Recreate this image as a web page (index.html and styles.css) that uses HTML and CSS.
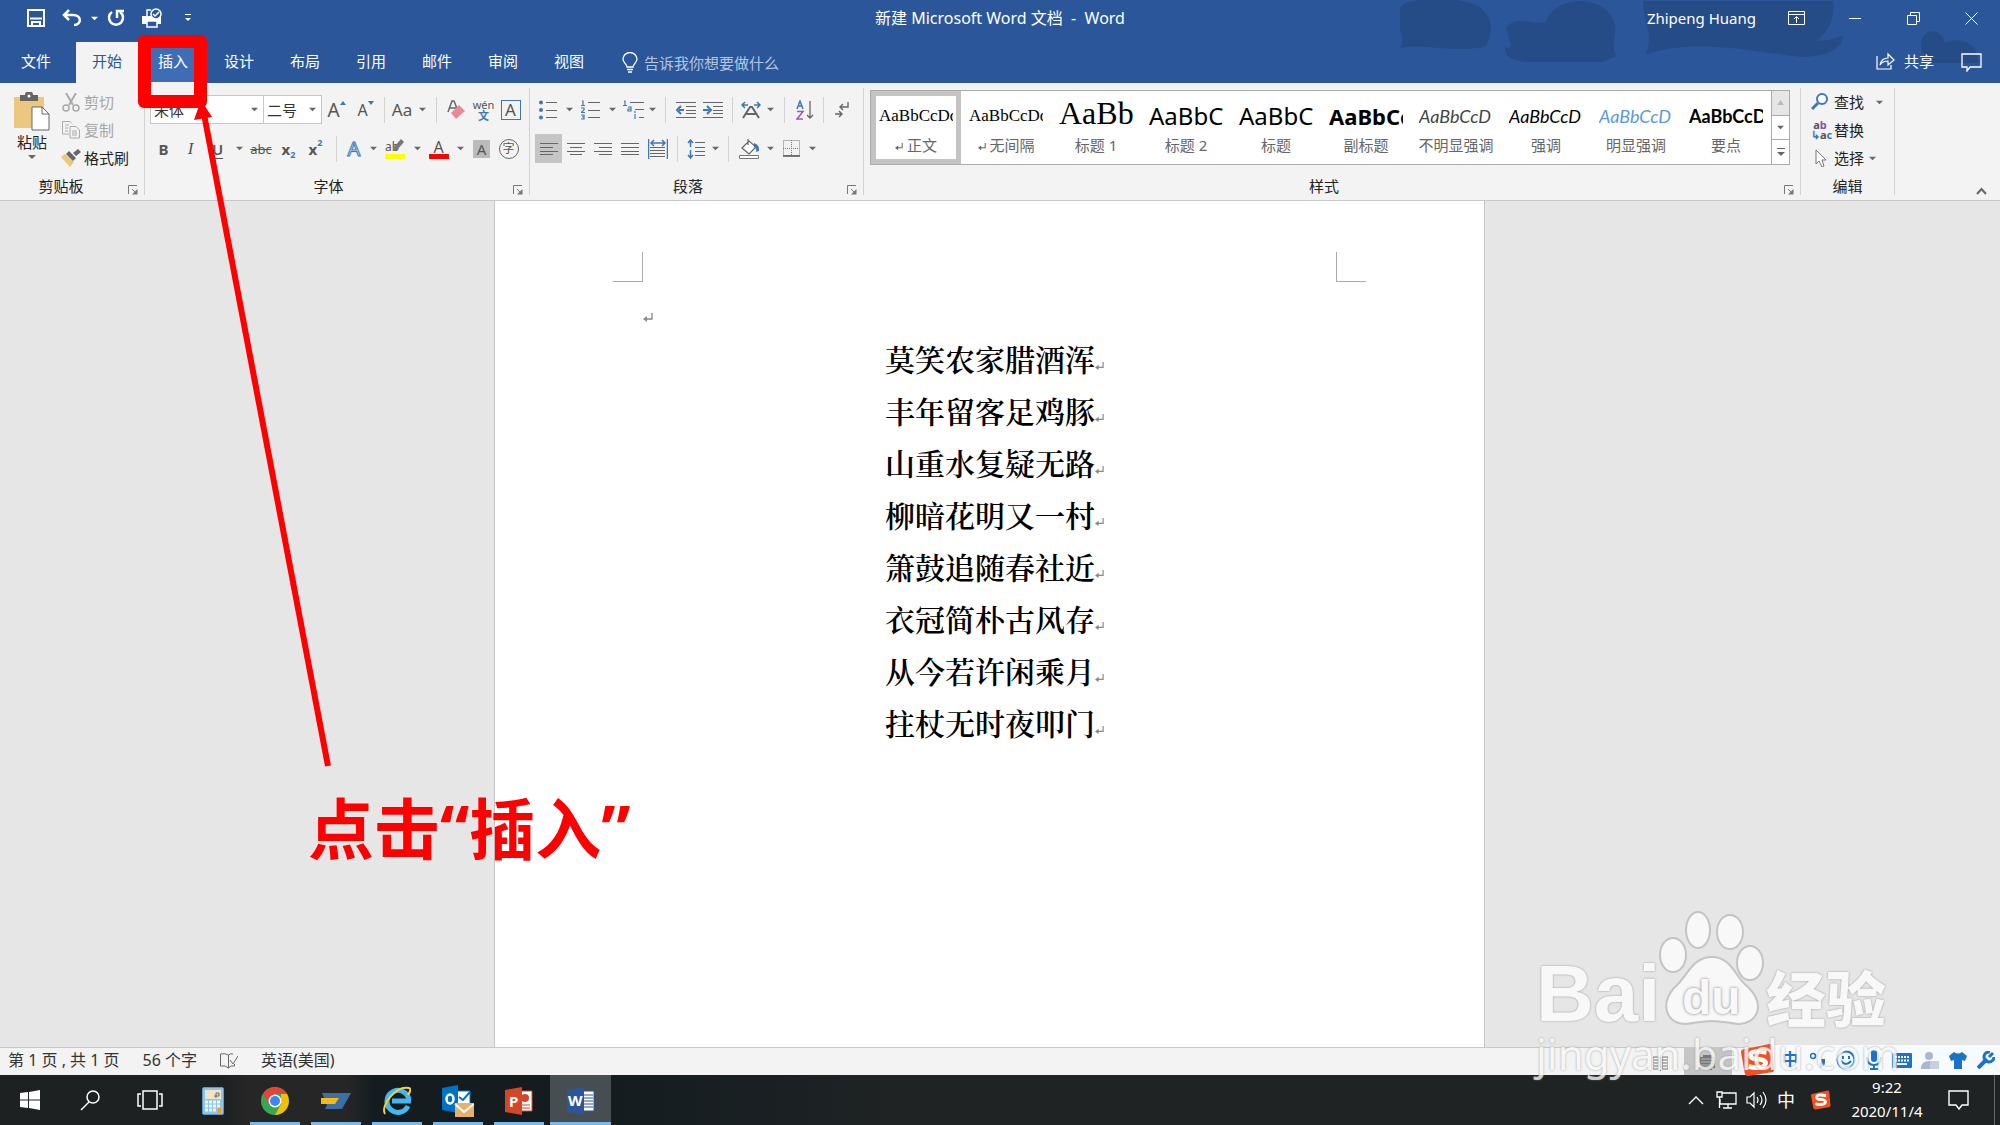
FILE: index.html
```html
<!DOCTYPE html>
<html lang="zh-CN">
<head>
<meta charset="utf-8">
<title>新建 Microsoft Word 文档 - Word</title>
<link rel="stylesheet" href="styles.css">
</head>
<body>
<svg class="defs" aria-hidden="true">
  <symbol id="caret" viewBox="0 0 8 8"><path d="M0 2h8L4 6z" fill="currentColor"/></symbol>
  <symbol id="launcher" viewBox="0 0 10 10"><path d="M.5 9V.5H9M4 4l4 4" fill="none" stroke="#777"/><path d="M9.500 4v5.500H4z" fill="#777"/></symbol>
  <symbol id="ret" viewBox="0 0 10 10"><path d="M9 0v6H3" fill="none" stroke="currentColor" stroke-width="1.300"/><path d="M0 6l4-3v6z" fill="currentColor"/></symbol>
  <symbol id="sogou" viewBox="0 0 36 36"><path d="M2 7L30 1q3 0 3 3l2 24q0 3-3 3L8 35q-3 0-4-3L0 10q0-3 2-3z" fill="#f4511e"/><path d="M27 10q-17-3-17 3 0 4 8 4 9 1 8 5-2 6-18 3" fill="none" stroke="#fff" stroke-width="5"/></symbol>
</svg>
<div class="app">
  <header class="head">
    <svg class="clouds" viewBox="0 0 600 64" aria-hidden="true"><g fill="#244a83" opacity=".8"><path d="M4 4c20-8 60-6 74 2 20 14 12 32 8 40-22 8-62-3-86 2 4-8 2-14-1-20-4-10-2-20 5-24z"/><path d="M106 28c10-14 28-2 40-6 8-28 60-28 68 0 4 12-4 20 2 34l-14 6h-70c-20 0-28-6-27-15 10 5 4-8 1-19z"/><path d="M243 1h190c3 20-8 33-16 40 10 0 20-3 26-6 0 16-20 21-40 22-50-5-110-20-158-2 10-16-2-35-2-54z"/><path d="M521 45c0-18 22-18 24-2 12-6 26-2 31 8l3 12h-55c3-8-3-10-3-18z"/></g></svg>
    <div class="titlebar">
      <div class="qat">
        <button class="w36" aria-label="保存"><svg width="18" height="18" viewBox="0 0 18 18"><path d="M1 1h16v16H1zM3 9.500h12M5 17v-4h8v4" fill="none" stroke="#fff" stroke-width="2"/></svg></button>
        <button class="w36" aria-label="撤消"><svg width="20" height="18" viewBox="0 0 20 18"><path d="M7 1L2 6l5 5M2 6h9c9 0 9 10 1 10" fill="none" stroke="#fff" stroke-width="2.500"/></svg></button>
        <button class="w8" aria-label="撤消选项"><svg width="7" height="7"><use href="#caret"/></svg></button>
        <button class="w36" aria-label="重复"><svg width="18" height="18" viewBox="0 0 18 18"><path d="M5 3a7 7 0 1 0 8 0M10 9V2h7" fill="none" stroke="#fff" stroke-width="2.500"/></svg></button>
        <button class="w36" aria-label="打印预览"><svg width="22" height="20" viewBox="0 0 22 20"><path d="M1 8h19v8H1z" fill="#fff"/><path d="M6 8V2h4M6 13h10v6H6z" fill="#2b579a" stroke="#fff" stroke-width="1.500"/><circle cx="15" cy="6" r="5" fill="#2b579a" stroke="#fff" stroke-width="1.500"/><path d="M12 6l2 2 4-4" fill="none" stroke="#fff" stroke-width="1.500"/></svg></button>
        <button class="w36" aria-label="自定义快速访问工具栏"><svg width="8" height="10" viewBox="0 0 8 10"><path d="M1 1.500h6" stroke="#fff"/><path d="M1 5h6L4 8z" fill="#fff"/></svg></button>
      </div>
      <div class="title">新建 Microsoft Word 文档&nbsp; -&nbsp; Word</div>
      <div class="win">
        <span class="user">Zhipeng Huang</span>
        <button class="w60" aria-label="功能区显示选项"><svg width="17" height="14" viewBox="0 0 17 14"><path d="M.5.5h16v13H.5zM1 3.500h15M8.500 12V6M6 8l2.500-2.500L11 8" fill="none" stroke="#fff"/></svg></button>
        <button class="w58" aria-label="最小化"><svg width="12" height="14"><path d="M0 7.500h12" stroke="#fff"/></svg></button>
        <button class="w58" aria-label="还原"><svg width="13" height="13" viewBox="0 0 13 13"><path d="M.5 3.500h9v9h-9zM3.500 3V.5h9v9H10" fill="none" stroke="#fff"/></svg></button>
        <button class="w58" aria-label="关闭"><svg width="13" height="13" viewBox="0 0 13 13"><path d="M.5.5l12 12M12.500.5l-12 12" stroke="#fff"/></svg></button>
      </div>
    </div>
    <nav class="tabs">
      <button class="tab file">文件</button>
      <button class="tab active">开始</button>
      <button class="tab hover">插入</button>
      <button class="tab">设计</button>
      <button class="tab">布局</button>
      <button class="tab">引用</button>
      <button class="tab">邮件</button>
      <button class="tab">审阅</button>
      <button class="tab">视图</button>
      <label class="tell"><svg width="16" height="21" viewBox="0 0 16 21"><path d="M5 15c0-3-4-4-4-8a7 6.500 0 0 1 14 0c0 4-4 5-4 8zM5 17.500h6M6 20h4" fill="none" stroke="#fff" stroke-width="1.300"/></svg><input type="text" aria-label="操作说明搜索" placeholder="告诉我你想要做什么"></label>
      <button class="share"><svg width="20" height="18" viewBox="0 0 20 18"><path d="M1 4v13h14v-4M4 13c1-5 4-7 8-7V2l6 6-6 5v-4c-4 0-6 1-8 4z" fill="none" stroke="#fff" stroke-width="1.200"/></svg>共享</button>
      <button class="comment" aria-label="批注"><svg width="21" height="19" viewBox="0 0 21 19"><path d="M1 1h19v13H9l-3 4v-4H1z" fill="none" stroke="#fff" stroke-width="1.300"/></svg></button>
    </nav>
  </header>

  <section class="ribbon">
    <div class="group clip">
      <div class="body cliprow">
        <button class="paste"><svg width="36" height="39" viewBox="0 0 36 39"><path d="M0 5h30v31H0z" fill="#ecc77f"/><path d="M6 3h5a4 4 0 0 1 8 0h5v6H6z" fill="#666"/><circle cx="15" cy="4" r="1.500" fill="#fff"/><path d="M18 15h10l7 7v16H18z" fill="#fff" stroke="#666"/><path d="M28 15v7h7" fill="none" stroke="#666"/></svg><span>粘贴</span><svg width="8" height="8"><use href="#caret"/></svg></button>
        <div class="stack">
          <button class="line off"><svg width="18" height="19" viewBox="0 0 18 19"><path d="M4 0l7 12M14 0L7 12" stroke="#aaa" stroke-width="2"/><circle cx="4" cy="15" r="3" fill="none" stroke="#aaa" stroke-width="1.500"/><circle cx="14" cy="15" r="3" fill="none" stroke="#aaa" stroke-width="1.500"/></svg>剪切</button>
          <button class="line off"><svg width="18" height="18" viewBox="0 0 18 18"><path d="M7 13H.5V.5H8l2 2M8 5.500h6l3.500 3.500v8H8zM10 10h5M10 12h5M10 14h5M3 4h4M3 7h3M3 10h3" fill="none" stroke="#aaa"/></svg>复制</button>
          <button class="line"><svg width="20" height="18" viewBox="0 0 20 18"><path d="M0 8l4-3 9 8-4 5z" fill="#ecc77f"/><path d="M5 5l3-3 7 7-3 3zM12 4l5-4 3 3-5 4z" fill="#666"/></svg>格式刷</button>
        </div>
      </div>
      <div class="foot"><span>剪贴板</span><button aria-label="剪贴板选项"><svg width="10" height="10"><use href="#launcher"/></svg></button></div>
    </div>

    <div class="group font">
      <div class="body rows">
        <div class="row">
          <label class="combo face"><select aria-label="字体"><option>宋体</option></select><svg width="7" height="7"><use href="#caret"/></svg></label>
          <label class="combo size"><select aria-label="字号"><option>二号</option></select><svg width="7" height="7"><use href="#caret"/></svg></label>
          <button class="w29 big" aria-label="增大字号">A<svg class="up" width="6" height="4" viewBox="0 0 6 4"><path d="M0 4l3-4 3 4z" fill="#3e77b5"/></svg></button>
          <button class="w29 mid" aria-label="减小字号">A<svg class="up" width="6" height="4" viewBox="0 0 6 4"><path d="M0 0h6L3 4z" fill="#3e77b5"/></svg></button>
          <i class="sep w8"></i>
          <button class="w42 case" aria-label="更改大小写">Aa<svg width="7" height="7"><use href="#caret"/></svg></button>
          <i class="sep w12"></i>
          <button class="w28" aria-label="清除格式"><svg width="18" height="20" viewBox="0 0 18 20"><path d="M1 12L5 1h2l4 10M3 8h6" fill="none" stroke="#666" stroke-width="1.500"/><path d="M4 13l8-8 6 6-9 8z" fill="#e8899a"/></svg></button>
          <button class="w27 pinyin" aria-label="拼音指南"><span>wén</span><b>文</b></button>
          <button class="w27" aria-label="字符边框"><span class="boxed">A</span></button>
        </div>
        <div class="row">
          <button class="w27 bold">B</button>
          <button class="w27 ital">I</button>
          <button class="w27 under">U</button>
          <button class="w16" aria-label="下划线选项"><svg width="7" height="7"><use href="#caret"/></svg></button>
          <button class="w28 strike">abc</button>
          <button class="w27 script">x<sub>2</sub></button>
          <button class="w27 script">x<sup>2</sup></button>
          <i class="sep w14"></i>
          <button class="w22 glow">A</button>
          <button class="w16" aria-label="文本效果选项"><svg width="7" height="7"><use href="#caret"/></svg></button>
          <button class="w28 ink yellow"><span>ab<svg width="11" height="12" viewBox="0 0 11 12"><path d="M0 9l8-9 3 3-7 8-4 1z" fill="#777"/></svg></span></button>
          <button class="w16" aria-label="突出显示选项"><svg width="7" height="7"><use href="#caret"/></svg></button>
          <button class="w27 ink red"><span>A</span></button>
          <button class="w16" aria-label="字体颜色选项"><svg width="7" height="7"><use href="#caret"/></svg></button>
          <button class="w27"><span class="shade">A</span></button>
          <button class="w27"><span class="ring">字</span></button>
        </div>
      </div>
      <div class="foot"><span>字体</span><button aria-label="字体选项"><svg width="10" height="10"><use href="#launcher"/></svg></button></div>
    </div>

    <div class="group para">
      <div class="body rows">
        <div class="row">
          <button class="w26" aria-label="项目符号"><svg width="18" height="20" viewBox="0 0 18 20"><path d="M7 2.500h11M7 10.500h11M7 17.500h11" stroke="#666"/><g fill="#3e77b5"><circle cx="2" cy="2.500" r="2"/><circle cx="2" cy="10" r="2"/><circle cx="2" cy="17.500" r="2"/></g></svg></button>
          <button class="w16" aria-label="项目符号选项"><svg width="7" height="7"><use href="#caret"/></svg></button>
          <button class="w27" aria-label="编号"><svg width="19" height="20" viewBox="0 0 19 20"><path d="M7 2.500h12M7 10.500h12M7 17.500h12" stroke="#666"/><path d="M1 1h1v4M0 5.500h4M0 8h3v2L0 12.500h4M0 15h3v4H0M1 17h2" fill="none" stroke="#3e77b5" stroke-width="1.200"/></svg></button>
          <button class="w16" aria-label="编号选项"><svg width="7" height="7"><use href="#caret"/></svg></button>
          <button class="w26" aria-label="多级列表"><svg width="21" height="20" viewBox="0 0 21 20"><path d="M7 2.500h14M12 9.500h9M16 17.500h5" stroke="#666"/><path d="M1 1h1v4M0 5.500h4M5 7h3v4H5V9h3M12 14v5M12 11v2" fill="none" stroke="#3e77b5" stroke-width="1.200"/></svg></button>
          <button class="w12" aria-label="多级列表选项"><svg width="7" height="7"><use href="#caret"/></svg></button>
          <i class="sep w14"></i>
          <button class="w27" aria-label="减少缩进量"><svg width="20" height="18" viewBox="0 0 20 18"><path d="M0 1.500h20M10 5.500h10M10 9.500h10M10 12.500h10M0 16.500h20" stroke="#666"/><path d="M8 9H3M5 5L1 9l4 4" fill="none" stroke="#3e77b5" stroke-width="2"/></svg></button>
          <button class="w28" aria-label="增加缩进量"><svg width="20" height="18" viewBox="0 0 20 18"><path d="M0 1.500h20M10 5.500h10M10 9.500h10M10 12.500h10M0 16.500h20" stroke="#666"/><path d="M0 9h6M4 5l4 4-4 4" fill="none" stroke="#3e77b5" stroke-width="2"/></svg></button>
          <i class="sep w10"></i>
          <button class="w27" aria-label="中文版式"><svg width="20" height="18" viewBox="0 0 20 18"><path d="M2 17L9 6h2l7 11M5 13h10" fill="none" stroke="#666" stroke-width="2"/><path d="M4 1L1 4l3 3M1 4h6M16 1l3 3-3 3M19 4h-6" fill="none" stroke="#3e77b5" stroke-width="1.500"/></svg></button>
          <button class="w12" aria-label="中文版式选项"><svg width="7" height="7"><use href="#caret"/></svg></button>
          <i class="sep w16"></i>
          <button class="w26" aria-label="排序"><svg width="18" height="20" viewBox="0 0 18 20"><path d="M1 9l3-8 3 8M2 6h4" fill="none" stroke="#3e77b5" stroke-width="1.500"/><path d="M1 11.500h6L1 19h6" fill="none" stroke="#9b59b6" stroke-width="1.500"/><path d="M14 1v17M11 15l3 3 3-3" fill="none" stroke="#666" stroke-width="1.300"/></svg></button>
          <i class="sep w10"></i>
          <button class="w28" aria-label="显示编辑标记"><svg width="14" height="16" viewBox="0 0 14 16"><path d="M13 0v5H6M8 2L5 5l3 3M0 12h6M4 9l3 3-3 3" fill="none" stroke="#666" stroke-width="1.400"/></svg></button>
        </div>
        <div class="row">
          <button class="w27 on" aria-label="左对齐"><svg width="18" height="14"><path d="M0 1.500h18M0 5.500h13M0 9.500h18M0 12.500h13" stroke="#666"/></svg></button>
          <button class="w27" aria-label="居中"><svg width="18" height="14"><path d="M0 1.500h18M3 5.500h12M0 9.500h18M3 12.500h12" stroke="#666"/></svg></button>
          <button class="w27" aria-label="右对齐"><svg width="18" height="14"><path d="M0 1.500h18M5 5.500h13M0 9.500h18M5 12.500h13" stroke="#666"/></svg></button>
          <button class="w27" aria-label="两端对齐"><svg width="18" height="14"><path d="M0 1.500h18M0 5.500h18M0 9.500h18M0 12.500h18" stroke="#666"/></svg></button>
          <button class="w29" aria-label="分散对齐"><svg width="20" height="20" viewBox="0 0 20 20"><path d="M.5 0v20M19.500 0v20M3 4h14M6 1L3 4l3 3M14 1l3 3-3 3" fill="none" stroke="#3e77b5" stroke-width="1.500"/><path d="M2 8.500h15M2 11.500h15M2 14.500h15M2 17.500h15" stroke="#666"/></svg></button>
          <i class="sep w10"></i>
          <button class="w28" aria-label="行距"><svg width="18" height="20" viewBox="0 0 18 20"><path d="M8 3.500h10M8 8.500h10M8 12.500h10M8 16.500h10" stroke="#666"/><path d="M3.500 1v7M1 4l2.500-3L6 4M3.500 11v8M1 16l2.500 3L6 16" fill="none" stroke="#3e77b5" stroke-width="1.500"/></svg></button>
          <button class="w10" aria-label="行距选项"><svg width="7" height="7"><use href="#caret"/></svg></button>
          <i class="sep w16"></i>
          <button class="w26" aria-label="底纹"><svg width="21" height="20" viewBox="0 0 21 20"><path d="M3 9l7-7 7 6-7 7zM9 6V0" fill="#fff" stroke="#666" stroke-width="1.200"/><path d="M15 4q6 2 5 8l-3 1q1-4-2-5z" fill="#3e77b5"/><path d="M.5 16.500h19v3H.5z" fill="#fff" stroke="#777"/></svg></button>
          <button class="w16" aria-label="底纹选项"><svg width="7" height="7"><use href="#caret"/></svg></button>
          <button class="w26" aria-label="边框"><svg width="17" height="17" viewBox="0 0 17 17"><path d="M.5.5h16v15H.5zM8.500 0v16M0 8.500h16" fill="none" stroke="#777" stroke-dasharray="1 1"/><path d="M0 16h17" stroke="#555" stroke-width="1.500"/></svg></button>
          <button class="w16" aria-label="边框选项"><svg width="7" height="7"><use href="#caret"/></svg></button>
        </div>
      </div>
      <div class="foot"><span>段落</span><button aria-label="段落选项"><svg width="10" height="10"><use href="#launcher"/></svg></button></div>
    </div>

    <div class="group styles">
      <div class="body">
        <div class="gallery">
          <button class="style sel"><span class="pv song">AaBbCcDd</span><span><svg width="8" height="8"><use href="#ret"/></svg> 正文</span></button>
          <button class="style"><span class="pv song">AaBbCcDd</span><span><svg width="8" height="8"><use href="#ret"/></svg> 无间隔</span></button>
          <button class="style"><span class="pv h1">AaBb</span><span>标题 1</span></button>
          <button class="style"><span class="pv h2">AaBbC</span><span>标题 2</span></button>
          <button class="style"><span class="pv h2">AaBbC</span><span>标题</span></button>
          <button class="style"><span class="pv h2 heavy">AaBbCc</span><span>副标题</span></button>
          <button class="style"><span class="pv em soft">AaBbCcD</span><span>不明显强调</span></button>
          <button class="style"><span class="pv em">AaBbCcD</span><span>强调</span></button>
          <button class="style"><span class="pv em blue">AaBbCcD</span><span>明显强调</span></button>
          <button class="style"><span class="pv key">AaBbCcDd</span><span>要点</span></button>
          <div class="scroll">
            <button class="dis" aria-label="上一行"><svg width="7" height="5" viewBox="0 0 7 5"><path d="M0 5l3.500-5L7 5z" fill="#bbb"/></svg></button>
            <button aria-label="下一行"><svg width="7" height="7"><use href="#caret"/></svg></button>
            <button aria-label="其他"><svg width="8" height="9" viewBox="0 0 8 9"><path d="M0 .5h8" stroke="#666"/><path d="M0 4h8L4 8z" fill="#666"/></svg></button>
          </div>
        </div>
      </div>
      <div class="foot"><span>样式</span><button aria-label="样式选项"><svg width="10" height="10"><use href="#launcher"/></svg></button></div>
    </div>

    <div class="group edit">
      <div class="body stack">
        <button class="line"><svg width="18" height="18" viewBox="0 0 18 18"><circle cx="11" cy="6" r="5" fill="#fff" stroke="#3e77b5" stroke-width="2"/><path d="M7 10l-6 6" stroke="#3e77b5" stroke-width="3"/></svg>查找<svg class="gap" width="7" height="7"><use href="#caret"/></svg></button>
        <button class="line"><span class="abac"><span>a<em>b</em></span><span><i>↳</i>a<i>c</i></span></span>替换</button>
        <button class="line"><svg width="18" height="18" viewBox="0 0 18 18"><path d="M5 1v14l3-3 3 6 2-1-2-6h4z" fill="#fff" stroke="#777"/></svg>选择<svg width="7" height="7"><use href="#caret"/></svg></button>
      </div>
      <div class="foot"><span>编辑</span></div>
    </div>
    <div class="tail"><button aria-label="折叠功能区"><svg width="11" height="8" viewBox="0 0 11 8"><path d="M1 7l4.500-5L10 7" fill="none" stroke="#666" stroke-width="2"/></svg></button></div>
  </section>

  <main class="canvas">
    <article class="page">
      <div class="corners"><i class="tl"></i><i class="tr"></i></div>
      <div class="text">
        <p class="empty"><svg width="10" height="10"><use href="#ret"/></svg></p>
        <p>莫笑农家腊酒浑<svg width="9" height="9"><use href="#ret"/></svg></p>
        <p>丰年留客足鸡豚<svg width="9" height="9"><use href="#ret"/></svg></p>
        <p>山重水复疑无路<svg width="9" height="9"><use href="#ret"/></svg></p>
        <p>柳暗花明又一村<svg width="9" height="9"><use href="#ret"/></svg></p>
        <p>箫鼓追随春社近<svg width="9" height="9"><use href="#ret"/></svg></p>
        <p>衣冠简朴古风存<svg width="9" height="9"><use href="#ret"/></svg></p>
        <p>从今若许闲乘月<svg width="9" height="9"><use href="#ret"/></svg></p>
        <p>拄杖无时夜叩门<svg width="9" height="9"><use href="#ret"/></svg></p>
      </div>
    </article>
  </main>

  <div class="status">
    <span>第 1 页 , 共 1 页</span><span>56 个字</span>
    <svg width="18" height="16" viewBox="0 0 18 16"><path d="M8.500 15V2Q5 0 .5 1v12q5-1 8 2 2-3 6-2v-2M8.500 2Q11 0 13 1M10 7l3 4 5-8" fill="none" stroke="#666"/></svg>
    <span>英语(美国)</span>
    <div class="views">
      <button class="w48" aria-label="阅读视图"><svg width="15" height="16" viewBox="0 0 15 16"><path d="M0 2h6v12H0zM9 2h6v12H9zM7.500 0v16M1 5h5M1 8h5M1 11h5M9 5h5M9 8h5M9 11h5" fill="none" stroke="#777"/></svg></button>
      <button class="w48 cur" aria-label="页面视图"><svg width="16" height="18" viewBox="0 0 16 18"><path d="M3 1h9v2h3v11h-3v2H3v-2H0V3h3z" fill="#777"/><path d="M1 5h13M1 8h13M1 11h13" stroke="#bbb"/></svg></button>
    </div>
  </div>

  <footer class="taskbar">
    <button class="w60" aria-label="开始菜单"><svg width="20" height="20" viewBox="0 0 20 20"><path d="M0 3l8-1v7.500H0zM9 2l11-2v9.500H9zM0 10.500h8V18l-8-1zM9 10.500h11V20L9 18z" fill="#fff"/></svg></button>
    <button class="w60" aria-label="搜索"><svg width="20" height="21" viewBox="0 0 20 21"><circle cx="13" cy="7" r="6" fill="none" stroke="#fff" stroke-width="1.500"/><path d="M9 12l-8 8" stroke="#fff" stroke-width="1.500"/></svg></button>
    <button class="w60" aria-label="任务视图"><svg width="26" height="20" viewBox="0 0 26 20"><path d="M6 1h14v18H6zM4 4H1v12h3M22 4h3v12h-3" fill="none" stroke="#fff" stroke-width="1.500"/></svg></button>
    <button class="app-icon idle" aria-label="计算器"><svg width="22" height="28" viewBox="0 0 22 28"><rect x=".5" y=".5" width="21" height="27" rx="1.500" fill="#8fc4e6" stroke="#5f99c4"/><path d="M3 3h16v9H3z" fill="#f2e3c7"/><path d="M12 9h5V6h-3v5" fill="none" stroke="#666"/><path d="M3 15h16M3 19h16M3 23h12" stroke="#e9f5fc" stroke-width="3" stroke-dasharray="3 1"/><path d="M16 21h3v5h-3z" fill="#f39c2b"/></svg></button>
    <button class="app-icon" aria-label="Chrome"><svg width="28" height="28" viewBox="0 0 28 28"><circle cx="14" cy="14" r="14" fill="#34a853"/><path d="M2 7a14 14 0 0 1 24 0H14l-6 10z" fill="#ea4335"/><path d="M26 7a14 14 0 0 1-12 21l6-11V7z" fill="#fbbc05"/><circle cx="14" cy="14" r="6.500" fill="#fff"/><circle cx="14" cy="14" r="5" fill="#4285f4"/></svg></button>
    <button class="app-icon" aria-label="终端"><svg width="30" height="16" viewBox="0 0 30 16"><path d="M1 0h29L21 16H4l2-4z" fill="#3b6fa5"/><path d="M0 5h18l-4 6H0z" fill="#f7b916"/></svg></button>
    <button class="app-icon" aria-label="Internet Explorer"><svg width="28" height="29" viewBox="0 0 28 29"><path d="M25 20a11 11 0 1 1 1-5H9" fill="none" stroke="#42b8ee" stroke-width="5"/><path d="M2 28C-3 20 13-1 26 2q3 1-1 7" fill="none" stroke="#f8cf3a" stroke-width="2"/></svg></button>
    <button class="app-icon" aria-label="Outlook"><svg width="32" height="32" viewBox="0 0 32 32"><path d="M15 6h13v17H15z" fill="#fff" stroke="#0072c6"/><path d="M17 12l4 3 7-8" fill="none" stroke="#0072c6" stroke-width="2"/><path d="M0 3l16-3v28L0 25z" fill="#0072c6"/><ellipse cx="8" cy="14" rx="3.500" ry="4.500" fill="none" stroke="#fff" stroke-width="2.500"/><path d="M13 18h19v14H13z" fill="#e8b16b"/><path d="M13 19l9 8 10-8" fill="none" stroke="#fff" stroke-width="2"/></svg></button>
    <button class="app-icon" aria-label="PowerPoint"><svg width="28" height="28" viewBox="0 0 28 28"><path d="M14 4h13v20H14z" fill="#fff" stroke="#d24726"/><circle cx="20" cy="11" r="4" fill="#d24726"/><path d="M16 18h9M16 21h9" stroke="#d24726"/><path d="M0 3l17-3v28L0 25z" fill="#d24726"/><text x="4" y="20" class="tile">P</text></svg></button>
    <button class="app-icon focus" aria-label="Word"><svg width="28" height="28" viewBox="0 0 28 28"><path d="M14 4h13v20H14z" fill="#fff" stroke="#2b579a"/><path d="M17 8h9M17 11h9M17 14h9M17 17h9M17 20h9" stroke="#2b579a"/><path d="M0 3l17-3v28L0 25z" fill="#2b579a"/><text x="1" y="19" class="tile">W</text></svg></button>
    <div class="tray">
      <button class="w32" aria-label="显示隐藏的图标"><svg width="16" height="9" viewBox="0 0 16 9"><path d="M1 8l7-7 7 7" fill="none" stroke="#fff" stroke-width="1.400"/></svg></button>
      <button class="w28" aria-label="网络"><svg width="21" height="18" viewBox="0 0 21 18"><path d="M6 2h14v11H4V8M12 13v4M7 17h9M1 1h5v5H1zM3.500 6v11" fill="none" stroke="#fff" stroke-width="1.300"/></svg></button>
      <button class="w32" aria-label="音量"><svg width="21" height="18" viewBox="0 0 21 18"><path d="M1 6h3l4-4v14l-4-4H1zM11 6q2 3 0 6M14 4q4 5 0 10M17 1q6 8 0 16" fill="none" stroke="#fff" stroke-width="1.200"/></svg></button>
      <button class="w28 lang">中</button>
      <button class="w42" aria-label="搜狗输入法"><svg width="20" height="20"><use href="#sogou"/></svg></button>
      <div class="clock"><span>9:22</span><span>2020/11/4</span></div>
      <button class="note" aria-label="通知"><svg width="21" height="20" viewBox="0 0 21 20"><path d="M1 1h19v14h-6l-3 4-3-4H1z" fill="none" stroke="#fff" stroke-width="1.400"/></svg></button>
    </div>
  </footer>

  <div class="ime">
    <svg width="36" height="34"><use href="#sogou"/></svg>
    <button>中</button>
    <button aria-label="标点"><svg width="16" height="16" viewBox="0 0 16 16"><circle cx="3" cy="4" r="2.500" fill="none" stroke="#1a73c8" stroke-width="1.500"/><path d="M13 7v3q0 3-3 4" fill="none" stroke="#1a73c8" stroke-width="4"/></svg></button>
    <button aria-label="表情"><svg width="20" height="20" viewBox="0 0 20 20"><circle cx="10" cy="10" r="8.500" fill="none" stroke="#1a73c8" stroke-width="2"/><path d="M7 6v3M13 6v3M5 11q5 6 10 0" fill="none" stroke="#1a73c8" stroke-width="2"/></svg></button>
    <button aria-label="语音"><svg width="16" height="20" viewBox="0 0 16 20"><rect x="5" width="6" height="12" rx="3" fill="#1a73c8"/><path d="M1 7q0 8 7 8t7-8M8 15v4M4 19h8" fill="none" stroke="#1a73c8" stroke-width="2"/></svg></button>
    <button aria-label="软键盘"><svg width="20" height="15" viewBox="0 0 20 15"><rect width="20" height="15" rx="1" fill="#1a73c8"/><path d="M3 4h14M3 7.500h14" stroke="#fff" stroke-width="2" stroke-dasharray="2 1"/><path d="M5 11h10" stroke="#fff" stroke-width="2"/></svg></button>
    <button aria-label="账户"><svg width="18" height="19" viewBox="0 0 18 19"><circle cx="8" cy="5" r="4" fill="#a9b7d1"/><path d="M0 18q0-8 8-8t8 8z" fill="#a9b7d1"/><path d="M9 10h9v8H9z" fill="#c6cfe0"/></svg></button>
    <button aria-label="皮肤"><svg width="18" height="18" viewBox="0 0 18 18"><path d="M5 1q4 3 8 0l5 4-2 5-3-1v9H5V9l-3 1-2-5z" fill="#1a73c8"/></svg></button>
    <button aria-label="工具箱"><svg width="18" height="18" viewBox="0 0 18 18"><path d="M1 17l9-9" stroke="#1a73c8" stroke-width="4"/><path d="M16 2l-4 4M13 1a5 5 0 1 0 4 5" fill="none" stroke="#1a73c8" stroke-width="3"/></svg></button>
  </div>

  <div class="watermark">
    <div class="brand"><span class="bai">Bai</span>
      <div class="paw"><svg width="108" height="118" viewBox="0 0 108 118"><g fill="#f8f8f8" stroke="#c4c4c4" stroke-width="2"><ellipse cx="15" cy="47" rx="13" ry="17"/><ellipse cx="40" cy="22" rx="12" ry="18"/><ellipse cx="72" cy="24" rx="13" ry="17"/><ellipse cx="92" cy="55" rx="13" ry="17"/><path d="M54 49c20 0 24 22 36 30 20 20 6 38-10 37-10-1-16-3-26-3s-16 2-26 3c-20 0-26-20-12-36C30 68 34 49 54 49z"/></g></svg><span>du</span></div>
      <span class="jy">经验</span></div>
    <div class="url">jingyan.baidu.com</div>
  </div>

  <div class="mark"></div>
  <svg class="arrow" width="150" height="670" viewBox="0 0 150 670" aria-hidden="true"><path d="M138 666L14 14" stroke="#f00" stroke-width="6"/><path d="M11 0L22 17 4 20z" fill="#f00"/></svg>
  <div class="callout">点击“插入”</div>
</div>
</body>
</html>
```

FILE: styles.css
```css
* { box-sizing: border-box; }
body {
  margin: 0;
  font: 15px/20px "Noto Sans", "Noto Sans CJK SC", sans-serif;
  color: #333;
}
button, input, select { font: inherit; color: inherit; background: none; border: 0; padding: 0; margin: 0; }
button { display: flex; align-items: center; justify-content: center; flex: none; white-space: nowrap; }
svg { flex: none; }
.defs { position: absolute; width: 0; height: 0; }
.app { position: relative; min-height: 100vh; display: flex; flex-direction: column; overflow: hidden; background: #e6e6e6; }

.w8 { width: 8px; } .w10 { width: 10px; } .w12 { width: 12px; } .w14 { width: 14px; } .w16 { width: 16px; }
.w22 { width: 22px; } .w26 { width: 26px; } .w27 { width: 27px; } .w28 { width: 28px; } .w29 { width: 29px; }
.w32 { width: 32px; } .w36 { width: 36px; } .w42 { width: 42px; } .w48 { width: 48px; } .w58 { width: 58px; } .w60 { width: 60px; }

/* title bar and tabs */
.head { position: relative; background: #2b579a; color: #fff; }
.clouds { position: absolute; right: 0; top: 0; width: 600px; height: 64px; }
.titlebar { position: relative; display: grid; grid-template-columns: 1fr auto 1fr; height: 42px; padding-bottom: 6px; align-items: center; }
.title { font-size: 16px; }
.qat { display: flex; padding-left: 18px; height: 30px; }
.win { display: flex; justify-content: flex-end; align-items: center; }
.user { margin-right: 10px; }
.tabs { position: relative; display: flex; height: 41px; }
.tab { width: 66px; padding-bottom: 4px; }
.tab.file { width: 72px; margin-right: 4px; }
.tab.active { width: 62px; background: #f3f3f3; color: #2b579a; margin-right: 2px; }
.tab.hover { background: #3e6db5; }
.tell { display: flex; align-items: center; gap: 6px; margin-left: 20px; flex: 1; }
.tell input { width: 300px; outline: 0; }
.tell input::placeholder { color: #b4c5e0; opacity: 1; }
.share { gap: 8px; margin-right: 27px; padding-bottom: 4px; }
.comment { margin-right: 18px; }

/* ribbon */
.ribbon { display: flex; height: 118px; padding: 5px 0; background: #f3f3f3; border-bottom: 1px solid #c8c8c8; color: #222; }
.group { display: flex; flex-direction: column; border-right: 1px solid #d2d2d2; }
.body { flex: 1; min-height: 0; }
.foot { display: flex; height: 18px; align-items: center; }
.foot span { flex: 1; text-align: center; line-height: 16px; }
.foot button { width: 22px; height: 18px; align-items: flex-end; }
.ribbon svg { color: #666; }
.clip { width: 145px; }
.font { width: 385px; padding-left: 5px; }
.para { width: 334px; padding-left: 5px; }
.styles { flex: 1; min-width: 0; padding-left: 6px; }
.edit { width: 94px; }
.tail { width: 105px; display: flex; align-items: flex-end; justify-content: flex-end; padding: 0 13px 0 0; }
.cliprow { display: flex; }
.paste { flex-direction: column; width: 58px; margin-left: 3px; justify-content: flex-start; padding-top: 4px; gap: 1px; }
.stack { display: flex; flex-direction: column; }
.line { height: 28px; justify-content: flex-start; gap: 5px; }
.cliprow .line svg { width: 20px; }
.cliprow .line { gap: 3px; }
.off { color: #a6a6a6; }
.edit .line { padding-left: 10px; }
.gap { margin-left: 7px; }
.abac { width: 18px; display: flex; flex-direction: column; font: bold 11px/10px "Noto Sans", sans-serif; color: #555; }
.abac em, .abac i { font-style: normal; color: #8e4fb0; }
.abac i { color: #3e77b5; }
.rows { display: flex; flex-direction: column; gap: 10px; padding-top: 7px; }
.row { display: flex; height: 29px; }
.font button { color: #555; }
.sep { background: linear-gradient(#d2d2d2, #d2d2d2) center / 1px 26px no-repeat; flex: none; }
.combo { display: flex; align-items: center; background: #fff; border: 1px solid #c6c6c6; padding: 0 5px 0 3px; color: #333; }
.combo select { appearance: none; flex: 1; min-width: 0; }
.face { width: 114px; }
.size { width: 58px; border-left: 0; }
.big { font-size: 19px; }
.mid { font-size: 16px; }
.up { margin-bottom: 14px; }
.case { font-size: 17px; gap: 7px; }
.pinyin { flex-direction: column; font-size: 11px; line-height: 11px; }
.pinyin b { color: #3e77b5; }
.boxed { width: 20px; height: 20px; border: 1px solid #3e77b5; font-size: 17px; line-height: 18px; }
.bold { font-weight: bold; }
.ital { font: italic 17px "Liberation Serif", serif; }
.under { text-decoration: underline; text-underline-offset: 3px; font-weight: 600; }
.strike { text-decoration: line-through; font-size: 13px; }
.script { font-weight: bold; }
.script sub, .script sup { font-size: 9px; line-height: 9px; color: #3e77b5; }
.script sub { margin-top: 12px; }
.script sup { margin-bottom: 12px; }
.font .glow { color: #fff; font-size: 20px; -webkit-text-stroke: 1px #3e77b5; text-shadow: 0 0 2px #9cc3ea; }
.ink span { width: 20px; height: 20px; border-bottom: 5px solid red; font-size: 16px; line-height: 16px; }
.ink.yellow span { border-color: #ff0; font-size: 12px; display: flex; }
.ink.yellow svg { margin-left: -6px; }
.shade { width: 17px; height: 18px; background: #bbb; line-height: 18px; }
.ring { width: 20px; height: 20px; border: 1px solid #666; border-radius: 50%; font-size: 12px; line-height: 17px; }
.on { background: #c5c5c5; }

/* style gallery */
.gallery { display: flex; height: 75px; margin-top: 2px; margin-right: 10px; background: #fff; border: 1px solid #ababab; }
.style { flex: 1; min-width: 0; flex-direction: column; justify-content: flex-start; color: #666; overflow: hidden; }
.style > span { height: 20px; }
.style .pv { width: 74px; height: 44px; overflow: hidden; text-align: left; color: #000; line-height: 50px; }
.sel { box-shadow: inset 0 0 0 5px #c3c3c3; }
.song { font: 17px "Liberation Serif", serif; }
.h1 { font: 32px "Liberation Serif", serif; }
.style .h1 { line-height: 44px; }
.h2 { font-size: 24px; }
.heavy { font-size: 22px; font-weight: bold; }
.em { font-size: 18px; font-style: italic; font-family: Lato, sans-serif; }
.key { font-size: 18px; font-weight: bold; font-family: Lato, sans-serif; }
.style .soft { color: #444; }
.style .blue { color: #5b9bd5; }
.scroll { width: 18px; display: flex; flex-direction: column; border-left: 1px solid #ababab; }
.scroll button { flex: 1; }
.scroll button + button { border-top: 1px solid #ababab; }
.dis { background: #e6e6e6; }

/* document */
.canvas { flex: 1; display: flex; justify-content: center; padding-right: 21px; background: #e6e6e6; }
.page { width: 991px; background: #fff; border: solid #c6c6c6; border-width: 0 1px; padding: 51px 118px 0; }
.corners { display: flex; justify-content: space-between; }
.corners i { width: 30px; height: 30px; border-bottom: 1px solid #aaa; }
.tl { border-right: 1px solid #aaa; }
.tr { border-left: 1px solid #aaa; }
.text { padding: 18px 20px 0 30px; text-align: center; color: #000; }
.text p { margin: 0; font: 600 30px/52px "Noto Serif CJK SC", "Noto Sans CJK SC", serif; }
.text svg { color: #888; }
.text .empty { height: 32px; line-height: 20px; text-align: left; }

/* status bar */
.status { display: flex; height: 28px; align-items: center; background: #f3f3f3; border-top: 1px solid #c8c8c8; padding: 0 0 4px 8px; gap: 23px; font-size: 16px; }
.status svg { margin-top: 2px; }
.views { display: flex; height: 27px; margin: 0 268px -4px auto; }
.cur { background: #c5c5c5; }
.ime { position: absolute; right: 0; bottom: 50px; height: 30px; width: 260px; display: flex; align-items: center; background: linear-gradient(90deg, transparent 18px, #f7fbfe 18px); color: #1a73c8; }
.ime button { flex: 1; font-size: 17px; font-weight: bold; }

/* taskbar */
.taskbar { display: flex; height: 50px; color: #fff; background: linear-gradient(90deg, #1d2122 220px, #262626 250px, #262626 345px, #141c20 375px, #141c20 600px, #1f2324 900px); }
.app-icon { width: 62px; border: solid transparent; border-width: 1px 0 0; background: linear-gradient(#76b9ed, #76b9ed) center bottom / 50px 3px no-repeat; }
.app-icon.idle { margin-left: 2px; background: none; }
.app-icon + .app-icon { width: 61px; }
.app-icon.focus { margin-left: 1px; background: linear-gradient(#76b9ed, #76b9ed) center bottom / 61px 3px no-repeat #474e51; }
.tile { font: bold 15px "Noto Sans", sans-serif; fill: #fff; }
.tray { display: flex; margin-left: auto; border-right: 1px solid #666; margin-right: 5px; }
.lang { font-size: 18px; }
.clock { display: flex; flex-direction: column; width: 90px; align-items: center; justify-content: center; line-height: 24px; padding-bottom: 2px; }
.note { width: 62px; padding-right: 10px; }

/* watermark */
.watermark { position: absolute; right: 106px; bottom: 43px; width: 358px; color: #f8f8f8; text-shadow: 0 0 2px #888; }
.brand { display: flex; align-items: flex-end; font: bold 80px/80px "Liberation Sans", sans-serif; height: 118px; }
.bai { width: 122px; line-height: 64px; }
.paw { position: relative; display: flex; }
.paw span { position: absolute; left: 24px; bottom: 3px; font-size: 48px; line-height: 50px; text-shadow: 0 0 3px #777; }
.brand .jy { font: 900 60px/60px "Noto Sans CJK SC", sans-serif; }
.url { font: 42px/56px "Noto Sans", sans-serif; opacity: .8; white-space: nowrap; }

/* annotation */
.mark { position: absolute; left: 138px; top: 35px; width: 69px; height: 73px; border: 13px solid #f00; border-radius: 6px; background: linear-gradient(transparent 34px, #f3f3f3 34px); }
.arrow { position: absolute; left: 190px; top: 100px; }
.callout { position: absolute; left: 308px; top: 788px; font: bold 66px/80px "Noto Sans", "Noto Sans CJK SC", sans-serif; color: #f00; white-space: nowrap; }
```
